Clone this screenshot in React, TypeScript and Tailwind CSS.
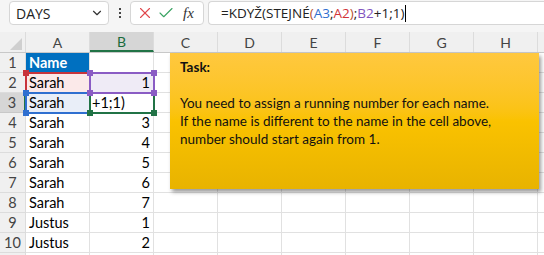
import { ChevronDown, X, Check } from "lucide-react"

const columns = ["A", "B", "C", "D", "E", "F", "G", "H", ""]

const rows: [string, string][] = [
  ["Name", ""],
  ["Sarah", "1"],
  ["Sarah", ""],
  ["Sarah", "3"],
  ["Sarah", "4"],
  ["Sarah", "5"],
  ["Sarah", "6"],
  ["Sarah", "7"],
  ["Justus", "1"],
  ["Justus", "2"],
  ["", ""],
]

const cellFont = { fontFamily: "Lato, 'Liberation Sans', sans-serif" }

function RangeBox({ className, color }: { className: string; color: string }) {
  return (
    <div className={`absolute border-2 ${className}`} style={{ borderColor: color }}>
      <span className="absolute -left-[4px] -top-[4px] h-[6px] w-[6px]" style={{ background: color }} />
      <span className="absolute -right-[4px] -top-[4px] h-[6px] w-[6px]" style={{ background: color }} />
      <span className="absolute -left-[4px] -bottom-[4px] h-[6px] w-[6px]" style={{ background: color }} />
      <span className="absolute -right-[4px] -bottom-[4px] h-[6px] w-[6px]" style={{ background: color }} />
    </div>
  )
}

export default function App() {
  return (
    <div className="relative h-[255px] w-[544px] overflow-hidden bg-white" style={cellFont}>
      {/* formula bar */}
      <div className="flex h-[32px] items-start bg-[#f5f5f5] pt-[1px]">
        <div className="ml-[9px] flex h-[24px] w-[100px] shrink-0 items-center justify-between rounded-[4px] border border-[#d6d6d6] bg-white pl-[6px] pr-[4px]">
          <span className="text-[14px] text-[#222]" style={{ fontFamily: "'Open Sans', sans-serif" }}>DAYS</span>
          <ChevronDown className="h-[14px] w-[14px] text-[#333]" strokeWidth={2} />
        </div>
        <div className="flex h-[24px] w-[21px] shrink-0 flex-col items-center justify-center gap-[2px]">
          <span className="h-[2px] w-[2px] bg-[#444]" />
          <span className="h-[2px] w-[2px] bg-[#444]" />
          <span className="h-[2px] w-[2px] bg-[#444]" />
        </div>
        <div className="flex h-[24px] w-[74px] shrink-0 items-center rounded-[4px] border border-[#d6d6d6] bg-white pl-[5px]">
          <X className="h-[18px] w-[18px] text-[#e0474c]" strokeWidth={1.5} />
          <Check className="ml-[3px] h-[18px] w-[18px] text-[#3aa363]" strokeWidth={1.5} />
          <span className="ml-[8px] text-[15px] italic text-[#333]" style={{ fontFamily: "'Liberation Serif', serif" }}>fx</span>
        </div>
        <div className="ml-[4px] flex h-[24px] flex-1 items-center rounded-l-[4px] border border-r-0 border-[#d6d6d6] bg-white pl-[12px] text-[13.5px] text-[#222]" style={{ fontFamily: "'Open Sans', sans-serif" }}>
          <span>=KDYŽ(STEJNÉ</span>
          <span className="text-[#b5512f]">(</span>
          <span className="text-[#2f6fd0]">A3</span>
          <span>;</span>
          <span className="text-[#d13438]">A2</span>
          <span className="text-[#b5512f]">)</span>
          <span>;</span>
          <span className="text-[#8254c0]">B2</span>
          <span>+1;1)</span>
          <span className="ml-[1px] h-[17px] w-[1px] bg-black" />
        </div>
      </div>

      {/* column headers */}
      <div className="flex h-[21px] border-b border-[#c8c8c8] bg-[#f0f0f0] text-[14px] text-[#444]">
        <div className="relative w-[26px] shrink-0 border-r border-[#dcdcdc]">
          <div className="absolute bottom-[2px] right-[3px] h-0 w-0 border-b-[12px] border-l-[12px] border-b-[#cfcfcf] border-l-transparent" />
        </div>
        {columns.map((c, i) => (
          <div
            key={i}
            className={`flex w-[64px] shrink-0 items-center justify-center border-r border-[#dcdcdc] ${
              c === "B" ? "border-b-2 border-b-[#217346] bg-[#d6d6d6] text-[#1a6b3c]" : ""
            }`}
          >
            {c}
          </div>
        ))}
      </div>

      {/* rows */}
      {rows.map(([a, b], i) => {
        const n = i + 1
        const selected = n === 3
        return (
          <div key={n} className="flex h-[20px] text-[14.5px] text-black">
            <div
              className={`flex w-[26px] shrink-0 items-center justify-center border-b border-r text-[#444] ${
                selected ? "border-b-[#c8c8c8] border-r-2 border-r-[#217346] bg-[#d6d6d6] text-[#1a6b3c]" : "border-[#dcdcdc] bg-[#f0f0f0]"
              }`}
            >
              {n <= 10 ? n : ""}
            </div>
            <div
              className={`flex w-[64px] shrink-0 items-center border-b border-r border-[#e1e1e1] pl-[3px] ${
                n === 1 ? "bg-[#0070c0] font-bold text-white" : n === 2 ? "bg-[#fbe9e9]" : n === 3 ? "bg-[#e9eef8]" : ""
              }`}
            >
              {a}
            </div>
            <div
              className={`flex w-[64px] shrink-0 items-center border-b border-r border-[#e1e1e1] ${
                n === 3 ? "justify-start pl-[2px]" : "justify-end pr-[3px]"
              } ${n === 2 ? "bg-[#efebf6]" : ""}`}
            >
              {n === 3 ? "+1;1)" : b}
            </div>
            {columns.slice(2).map((c, j) => (
              <div key={j} className="w-[64px] shrink-0 border-b border-r border-[#e1e1e1]" />
            ))}
          </div>
        )
      })}

      {/* formula reference highlights */}
      <RangeBox className="left-[25px] top-[72px] h-[22px] w-[66px]" color="#c8343b" />
      <RangeBox className="left-[25px] top-[92px] h-[22px] w-[66px]" color="#2f6fd0" />
      <RangeBox className="left-[89px] top-[92px] h-[22px] w-[66px]" color="#217346" />
      <RangeBox className="left-[89px] top-[72px] h-[22px] w-[66px]" color="#8a5cc4" />

      {/* task note */}
      <div className="absolute left-[170px] top-[53px] h-[136px] w-[369px] bg-gradient-to-b from-[#ffc83e] via-[#fac200] to-[#e8b300] px-[10px] pt-[5px] text-[13.5px] leading-[18px] text-[#111] shadow-[2px_3px_4px_rgba(0,0,0,0.4)]">
        <div className="font-bold">Task:</div>
        <div className="h-[18px]" />
        <div>You need to assign a running number for each name.</div>
        <div>If the name is different to the name in the cell above,</div>
        <div>number should start again from 1.</div>
      </div>
    </div>
  )
}
